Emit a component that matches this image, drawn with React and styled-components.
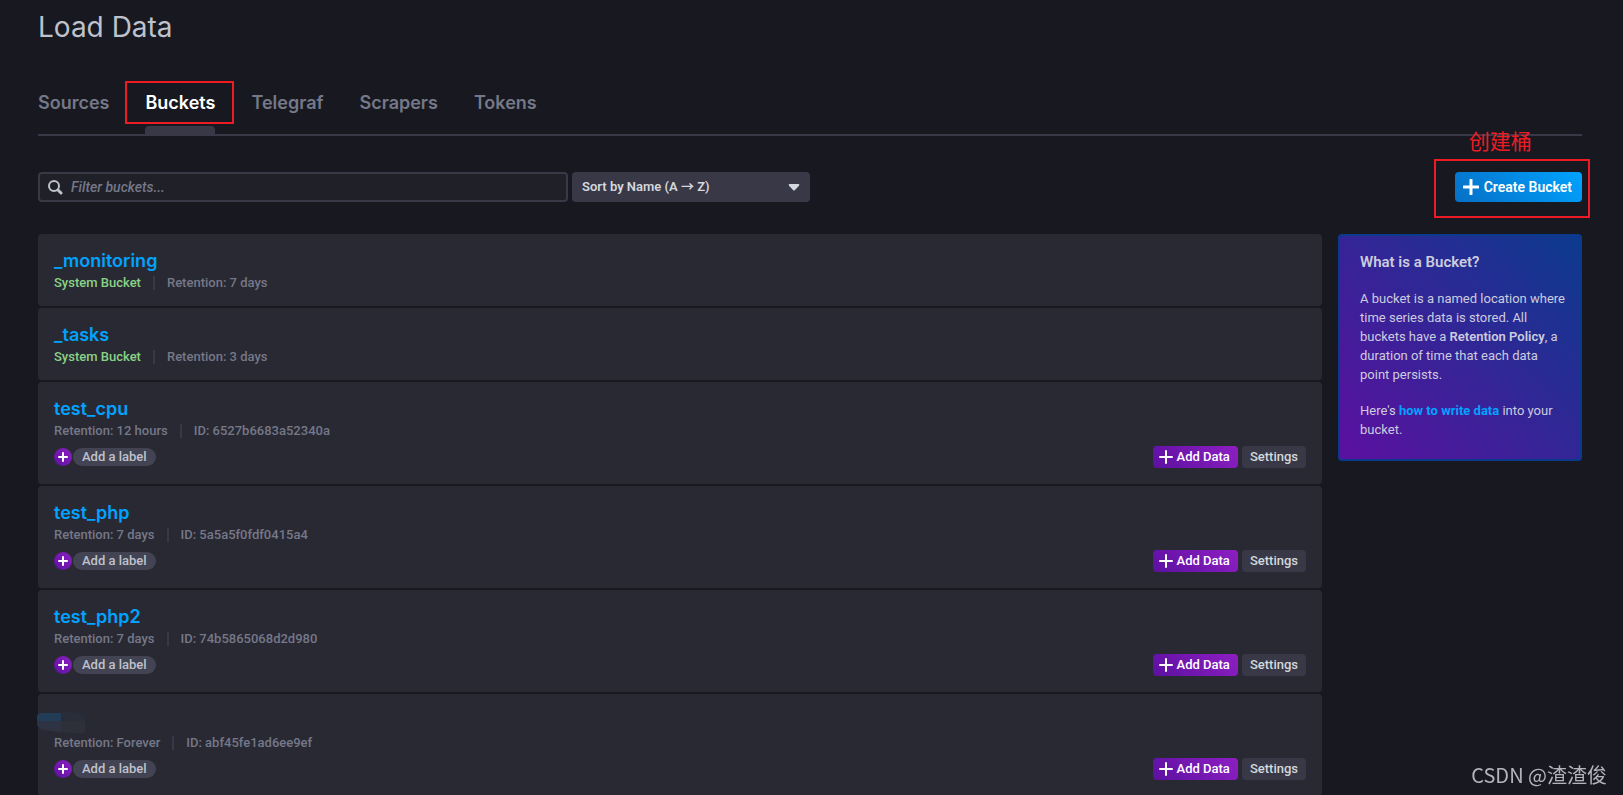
import React, { useState } from "react";
import styled, { createGlobalStyle, css } from "styled-components";

const GlobalStyle = createGlobalStyle`
  *, *::before, *::after {
    box-sizing: border-box;
  }
  body {
    margin: 0;
    background: #181820;
    color: #bec2cc;
    font-family: Roboto, "Noto Sans CJK SC", sans-serif;
    font-size: 13px;
    font-weight: 500;
  }
  button, input, select {
    font: inherit;
  }
  h1, h2, h3, h4, p, ul {
    margin: 0;
    padding: 0;
  }
`;

const Page = styled.div`
  position: relative;
  height: 100vh;
  overflow: hidden auto;
  scrollbar-width: none;
  padding: 8px 41px 0 38px;
`;

const Title = styled.h1`
  font-family: Inter, Roboto, sans-serif;
  font-size: 28px;
  line-height: 38px;
  font-weight: 400;
`;

const Tabs = styled.nav`
  display: flex;
  gap: 36px;
  margin-top: 35px;
  border-bottom: 2px solid #383846;
`;

const Tab = styled.a`
  position: relative;
  height: 53px;
  padding-top: 9px;
  font-family: Inter, Roboto, sans-serif;
  font-size: 18px;
  line-height: 26px;
  font-weight: 600;
  text-decoration: none;
  color: ${({ $active }) => ($active ? "#ffffff" : "#757888")};
  ${({ $active }) =>
    $active &&
    css`
      &::after {
        content: "";
        position: absolute;
        left: 0;
        right: 0;
        bottom: 0;
        height: 8px;
        border-radius: 4px 4px 0 0;
        background: #383846;
      }
    `}
`;

const Outline = styled.span`
  position: absolute;
  inset: ${({ $inset }) => $inset};
  border: 2px solid #ed1c24;
  pointer-events: none;
`;

const Note = styled.span`
  position: absolute;
  top: -47px;
  left: 14px;
  color: #ed1c24;
  font-family: "Noto Sans CJK SC", sans-serif;
  font-size: 21px;
  font-weight: 400;
  line-height: 30px;
  white-space: nowrap;
`;

const Toolbar = styled.div`
  display: flex;
  align-items: center;
  gap: 4px;
  margin: 36px 0 32px;
`;

const Search = styled.label`
  display: flex;
  align-items: center;
  gap: 8px;
  flex: 0 1 530px;
  height: 30px;
  padding: 0 8px;
  border: 2px solid #383846;
  border-radius: 4px;
  background: #202028;
  input {
    flex: 1;
    min-width: 0;
    padding: 0;
    border: 0;
    outline: 0;
    background: none;
    color: #bec2cc;
    font-size: 14px;
    font-style: italic;
  }
  input::placeholder {
    color: #757888;
    opacity: 1;
  }
`;

const SortBox = styled.div`
  position: relative;
  flex: 0 1 238px;
  select {
    display: block;
    width: 100%;
    height: 30px;
    padding: 0 30px 1px 10px;
    border: 0;
    border-radius: 4px;
    appearance: none;
    background: #383846;
    color: #d4d7dd;
    font-weight: 600;
  }
  svg {
    position: absolute;
    right: 10px;
    top: 12px;
    pointer-events: none;
  }
`;

const CreateWrap = styled.div`
  position: relative;
  margin-left: auto;
`;

const Button = styled.button`
  display: flex;
  align-items: center;
  justify-content: center;
  height: 22px;
  padding: 0 8px 1px;
  gap: 4px;
  border: 0;
  border-radius: 4px;
  cursor: pointer;
  white-space: nowrap;
  color: #d4d7dd;
  background: #383846;
  ${({ $kind }) =>
    $kind === "primary" &&
    css`
      height: 30px;
      padding: 0 10px 1px 8px;
      gap: 5px;
      color: #ffffff;
      font-size: 14px;
      font-weight: 600;
      background: linear-gradient(45deg, #066fc5, #00a3ff);
    `}
  ${({ $kind }) =>
    $kind === "purple" &&
    css`
      padding: 0 8px 1px 6px;
      color: #ffffff;
      background: linear-gradient(45deg, #5c10a0, #8e1fc3);
    `}
`;

const Content = styled.div`
  display: grid;
  grid-template-columns: repeat(6, 1fr);
  gap: 16px;
  align-items: start;
`;

const List = styled.ul`
  grid-column: span 5;
  display: flex;
  flex-direction: column;
  gap: 2px;
  list-style: none;
`;

const Card = styled.li`
  position: relative;
  display: flex;
  align-items: flex-end;
  justify-content: space-between;
  padding: 16px;
  border-radius: 4px;
  background: #292933;
`;

const BucketName = styled.h3`
  height: 25px;
  font-family: Inter, Roboto, sans-serif;
  font-size: 18px;
  line-height: 22px;
  font-weight: 600;
  a {
    color: #00a3ff;
    text-decoration: none;
  }
`;

const Meta = styled.div`
  display: flex;
  align-items: center;
  height: 15px;
  color: #757888;
  line-height: 14px;
  span + span {
    margin-left: 12px;
    padding-left: 12px;
    border-left: 2px solid #383846;
  }
`;

const SystemTag = styled.span`
  color: #8ad288;
`;

const Labels = styled.div`
  display: flex;
  align-items: center;
  gap: 1px;
  margin: 10px 0 2px;
`;

const AddLabel = styled.button`
  display: grid;
  place-items: center;
  width: 18px;
  height: 18px;
  padding: 0;
  border: 0;
  border-radius: 50%;
  background: linear-gradient(45deg, #5c10a0, #8e1fc3);
`;

const Pill = styled.span`
  height: 18px;
  padding: 0 9px;
  border-radius: 9px;
  line-height: 18px;
  background: #434453;
`;

const Actions = styled.div`
  display: flex;
  gap: 4px;
`;

const Panel = styled.aside`
  padding: 16px 12px 20px 20px;
  border: 2px solid #0b3a8d;
  border-radius: 4px;
  background: linear-gradient(45deg, #5c10a0, #0b3a8d);
  color: #ccccdf;
  font-weight: 400;
  h4 {
    font-size: 15px;
    line-height: 20px;
    font-weight: 600;
    margin-bottom: 17px;
  }
  p {
    line-height: 19px;
  }
  p + p {
    margin-top: 17px;
  }
  strong {
    font-weight: 600;
  }
  a {
    color: #00a3ff;
    font-weight: 700;
    text-decoration: none;
  }
`;

const Smudge = styled.svg`
  position: absolute;
  left: -1px;
  top: 18px;
`;

const Watermark = styled.div`
  position: fixed;
  right: 16px;
  bottom: 6px;
  color: #b4b4b8;
  font-family: "Noto Sans CJK SC", sans-serif;
  font-size: 20px;
  font-weight: 400;
  line-height: 28px;
`;

const Plus = ({ size, weight = 2 }) => (
  <svg width={size} height={size} viewBox={`0 0 ${size} ${size}`} aria-hidden="true">
    <path
      d={`M${size / 2} 1V${size - 1}M1 ${size / 2}H${size - 1}`}
      stroke="#fff"
      strokeWidth={weight}
      strokeLinecap="round"
    />
  </svg>
);

const tabs = ["Sources", "Buckets", "Telegraf", "Scrapers", "Tokens"];

const buckets = [
  { name: "_monitoring", system: true, retention: "7 days" },
  { name: "_tasks", system: true, retention: "3 days" },
  { name: "test_cpu", retention: "12 hours", id: "6527b6683a52340a" },
  { name: "test_php", retention: "7 days", id: "5a5a5f0fdf0415a4" },
  { name: "test_php2", retention: "7 days", id: "74b5865068d2d980" },
  { name: "", retention: "Forever", id: "abf45fe1ad6ee9ef" },
];

const BucketCard = ({ bucket }) => (
  <Card>
    <div>
      <BucketName>{bucket.name && <a href="#bucket">{bucket.name}</a>}</BucketName>
      <Meta>
        {bucket.system && <SystemTag>System Bucket</SystemTag>}
        <span>Retention: {bucket.retention}</span>
        {bucket.id && <span>ID: {bucket.id}</span>}
      </Meta>
      {!bucket.system && (
        <Labels>
          <AddLabel type="button" aria-label="Add a label">
            <Plus size={10} />
          </AddLabel>
          <Pill>Add a label</Pill>
        </Labels>
      )}
    </div>
    {!bucket.system && (
      <Actions>
        <Button type="button" $kind="purple">
          <Plus size={14} />
          Add Data
        </Button>
        <Button type="button">Settings</Button>
      </Actions>
    )}
    {!bucket.name && (
      <Smudge width="48" height="22" viewBox="0 0 48 22" aria-hidden="true">
        <path d="M0 4Q1 1 5 1H24V9H0Z" fill="#223c55" />
        <path d="M24 0H34Q43 1 48 5V9H24Z" fill="#292d39" />
        <path d="M0 9H24V20Q12 19 4 17Q0 15 0 12Z" fill="#2e3343" />
        <path d="M24 9H48V21H34L24 20Z" fill="#2d3038" />
      </Smudge>
    )}
  </Card>
);

const App = () => {
  const [filter, setFilter] = useState("");
  const shown = buckets.filter((b) => b.name.includes(filter));

  return (
    <Page>
      <GlobalStyle />
      <Title>Load Data</Title>
      <Tabs>
        {tabs.map((tab) => (
          <Tab key={tab} href={`#${tab.toLowerCase()}`} $active={tab === "Buckets"}>
            {tab}
            {tab === "Buckets" && <Outline $inset="0 -19px 10px -20px" />}
          </Tab>
        ))}
      </Tabs>
      <Toolbar>
        <Search>
          <svg width="15" height="15" viewBox="0 0 15 15" fill="none" aria-hidden="true">
            <circle cx="6" cy="6" r="5" stroke="#bec2cc" strokeWidth="2" />
            <path d="M10 10L13 13" stroke="#bec2cc" strokeWidth="3" strokeLinecap="round" />
          </svg>
          <input
            type="text"
            aria-label="Filter buckets"
            placeholder="Filter buckets..."
            value={filter}
            onChange={(e) => setFilter(e.target.value)}
          />
        </Search>
        <SortBox>
          <select aria-label="Sort buckets" defaultValue="asc">
            <option value="asc">Sort by Name (A → Z)</option>
            <option value="desc">Sort by Name (Z → A)</option>
          </select>
          <svg width="12" height="7" viewBox="0 0 12 7" aria-hidden="true">
            <path d="M1.5 0H10.5Q12 .3 11 1.7L7 6Q6 7 5 6L1 1.7Q0 .3 1.5 0Z" fill="#d4d7dd" />
          </svg>
        </SortBox>
        <CreateWrap>
          <Button type="button" $kind="primary">
            <Plus size={16} weight={3} />
            Create Bucket
          </Button>
          <Outline $inset="-13px -8px -16px -21px" />
          <Note>创建桶</Note>
        </CreateWrap>
      </Toolbar>
      <Content>
        <List>
          {shown.map((bucket, i) => (
            <BucketCard key={i} bucket={bucket} />
          ))}
        </List>
        <Panel>
          <h4>What is a Bucket?</h4>
          <p>
            A bucket is a named location where time series data is stored. All
            buckets have a <strong>Retention Policy</strong>, a duration of time
            that each data point persists.
          </p>
          <p>
            Here's <a href="#write">how to write data</a> into your bucket.
          </p>
        </Panel>
      </Content>
      <Watermark>CSDN @渣渣俊</Watermark>
    </Page>
  );
};

export default App;
